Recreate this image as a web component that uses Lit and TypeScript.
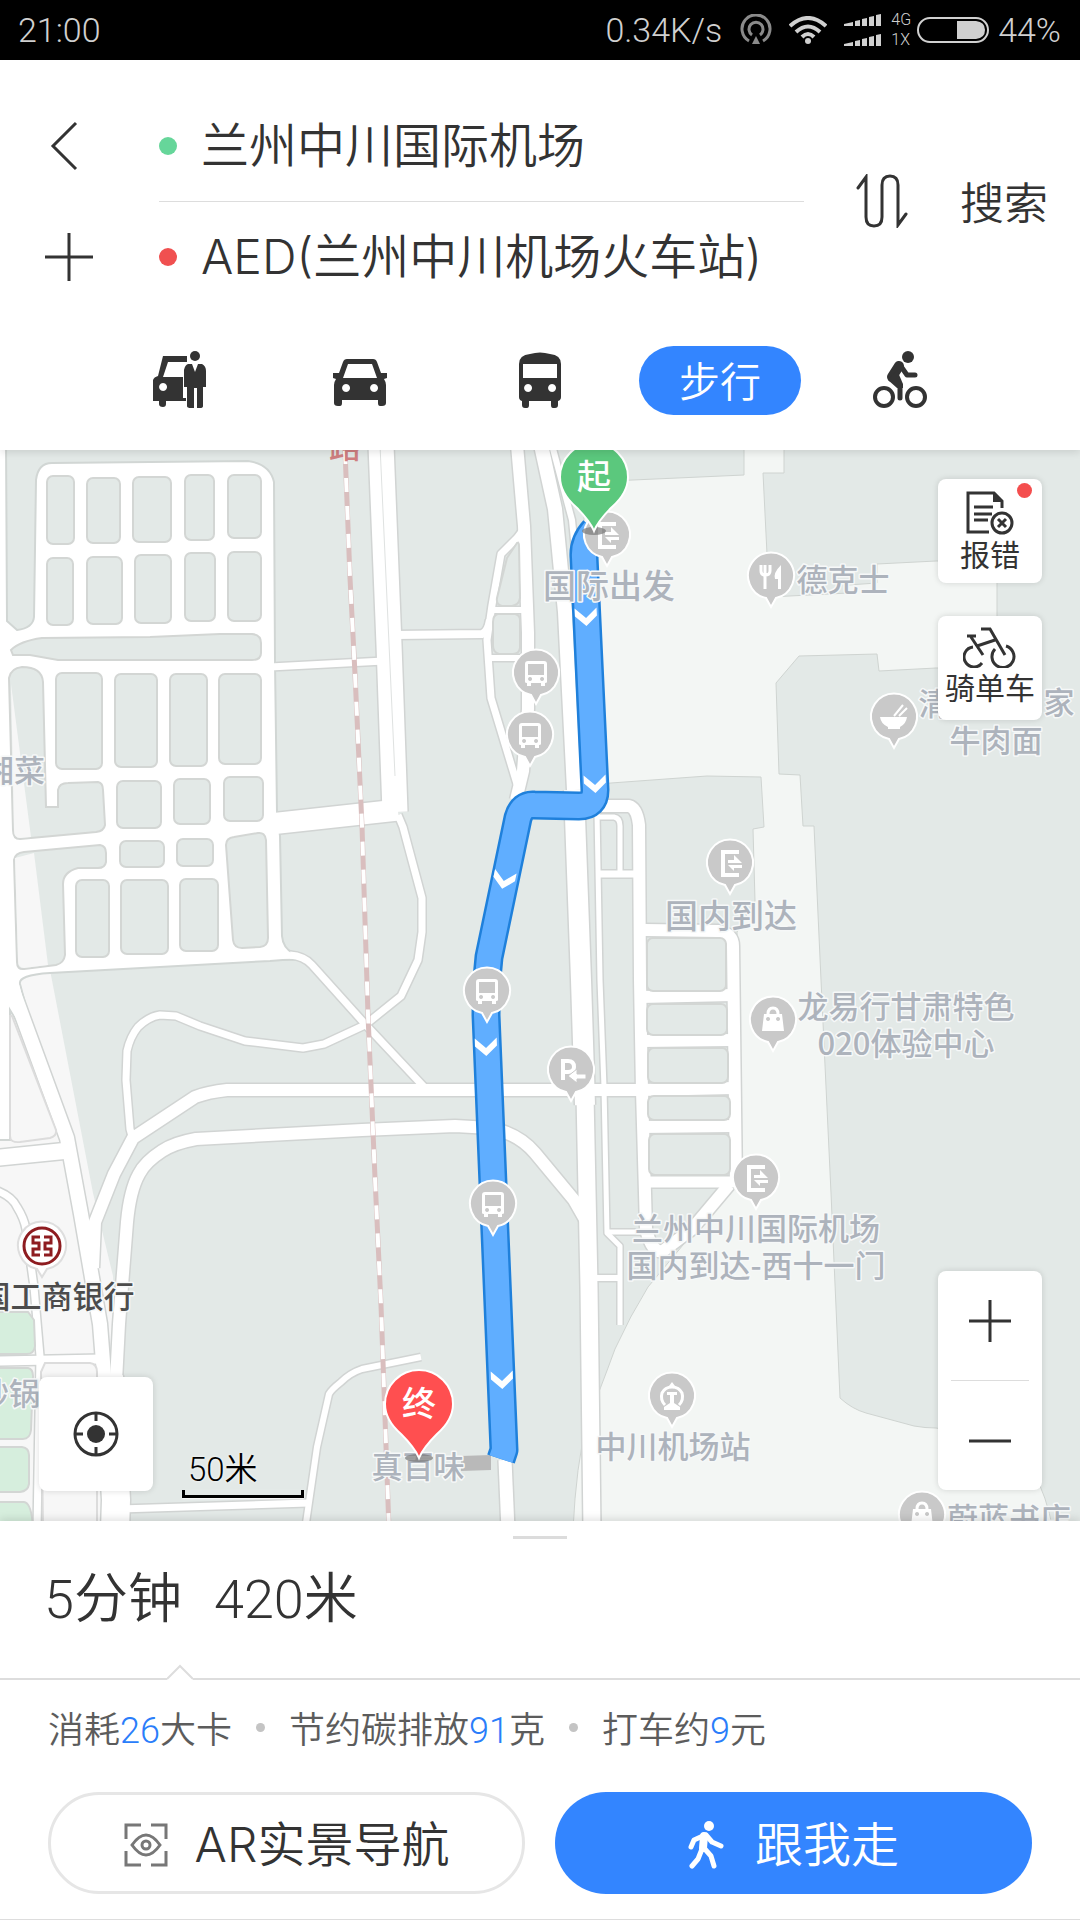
import { LitElement, html, svg, css } from "lit";
import { customElement, state } from "lit/decorators.js";

type Road = [width: number, d: string];

const roads: Road[] = [
  [25, "M381 445 L389 645 L395 812"],
  [21, "M270 824 L398 810"],
  [7, "M270 667 L384 661"],
  [8, "M395 635 L482 634 Q488 632 490 620"],
  [12, "M517 445 L524 526 L528 633 L528 709 L523 771 L516 800"],
  [7, "M523 530 L517 538 L501 554 L492 605 L487 640 L491 698 L517 784"],
  [6, "M493 610 L528 610"],
  [6, "M490 658 L528 658"],
  [14, "M541 445 L555 509 L565 612 L574 790"],
  [6, "M552 445 L572 520 L584 640 L588 780"],
  [20, "M574 790 L581 980 L585 1105"],
  [17, "M585 1095 L589 1287 L592 1530"],
  [12, "M590 806 L629 806 Q637 808 639 825 L640 980 L642 1091 L645 1193 L646 1229 Q652 1254 663 1251 L692 1229 L729 1185"],
  [5, "M597 812 L600 980 L604 1087 L607 1233 L620 1246 L620 1325"],
  [5, "M598 817 L614 817 Q620 818 620 826 L620 872"],
  [7, "M600 874 L638 874"],
  [5, "M607 1232 L645 1232"],
  [6, "M590 1278 L620 1278"],
  [12, "M645 930 L718 931 Q733 934 733 946 L736 1187"],
  [12, "M640 997 L734 995"],
  [12, "M640 1041 L734 1040"],
  [12, "M640 1090 L735 1088"],
  [12, "M640 1127 L735 1126"],
  [11, "M643 1182 L734 1182"],
  [7, "M425 1088 L365 1024 L312 965 Q304 956 290 955"],
  [7, "M133 1140 L130 1129 L126 1080 L127 1051 Q130 1037 138 1027 Q148 1017 160 1015 L176 1016 L200 1026 L245 1041 L303 1048 L324 1044 L365 1025 L401 996 L418 960 L422 932 L422 898 L403 827 L398 815"],
  [12, "M640 1090 L227 1090 Q208 1092 195 1097 L133 1138 L114 1174 L95 1222 L93 1268"],
  [12, "M590 1228 L574 1200 L535 1153 Q518 1133 490 1128 L455 1126 L362 1130 L196 1139 Q174 1143 162 1151 Q145 1162 139 1174 Q130 1190 127 1222 L119 1324 L115 1400"],
  [14, "M5 960 L15 996 L67 1138 L81 1214 L100 1324 L106 1400"],
  [28, "M109 1376 L116 1500 L115 1530"],
  [6, "M421 1357 L362 1369 Q350 1373 341 1382 Q331 1390 329 1394 L317 1447 L305 1530"],
  [7, "M120 1509 L308 1503"],
  [13, "M505 1460 L508 1530"],
  [7, "M-5 1190 Q12 1196 17 1207 Q24 1218 26 1229 L34 1287 L40 1356 L37 1530"],
  [16, "M-5 1158 L64 1151"],
  [9, "M-5 1361 L102 1359"],
];

const railway = "M345 450 L350 578 L355 674 L362 826 L368 1015 L375 1178 L381 1305 L389 1530";

/* Blocks enclosed by the streets: x, y, width, height. */
const blocks = [
  [47, 476, 27, 68], [87, 478, 33, 65], [133, 477, 38, 65], [185, 475, 29, 65], [228, 475, 33, 63],
  [47, 558, 26, 67], [87, 557, 35, 67], [135, 555, 36, 68], [185, 553, 30, 68], [228, 552, 33, 69],
  [56, 673, 46, 96], [115, 674, 42, 93], [170, 674, 37, 92], [219, 674, 42, 90],
  [117, 781, 44, 47], [174, 779, 36, 45], [224, 777, 39, 44],
  [120, 841, 44, 26], [177, 839, 36, 27],
  [76, 880, 33, 77], [121, 880, 47, 74], [180, 879, 38, 72],
  [647, 938, 79, 53], [647, 1004, 80, 31], [648, 1048, 80, 35], [648, 1096, 82, 24], [649, 1134, 81, 41],
];

const pins: [number, number, string][] = [
  [607, 535, "exit"], [536, 673, "bus"], [530, 735, "bus"], [487, 991, "bus"], [493, 1204, "bus"],
  [571, 1070, "parking"], [730, 863, "exit"], [756, 1178, "exit"], [771, 576, "food"],
  [894, 717, "noodle"], [773, 1020, "bag"], [922, 1515, "bag"], [672, 1396, "train"],
];

const glyphs: Record<string, unknown> = {
  bus: svg`<path fill="#fff" fill-rule="evenodd" d="M-8 -12H8Q11 -12 11 -9V9Q11 10 9 10V13H5V10H-5V13H-9V10Q-11 10 -11 9V-9Q-11 -12 -8 -12ZM-8 -9V2H8V-9ZM-6 4a2 2 0 1 0 .1 0ZM6 4a2 2 0 1 0 .1 0Z"/>`,
  exit: svg`<path fill="none" stroke="#fff" stroke-width="4" d="M9 -11H-7V12H9"/><path fill="#fff" d="M-2 -3H4V-8L12 0H-2ZM12 2H-2L4 8V5H12Z"/>`,
  parking: svg`<path fill="none" stroke="#fff" stroke-width="4" d="M-8 10V-9H-3Q3 -9 3 -3Q3 2 -3 2H-8"/><path fill="#fff" stroke="#c9c9c9" stroke-width="1" d="M-3 6L6 -1V4H15V9H6V13Z"/>`,
  food: svg`<path fill="none" stroke="#fff" stroke-width="3" d="M-10 -11V-5Q-10 -1 -6 -1Q-1 -1 -1 -5V-11M-6 -11V13"/><path fill="#fff" d="M10 -11Q2 -3 4 3H7V13H10V-11Z"/>`,
  noodle: svg`<path fill="#fff" d="M-14 0H13Q12 7 6 10V12H-6V10Q-13 7 -14 0Z"/><path stroke="#fff" stroke-width="2" d="M0 -1L9 -12M5 -1L13 -9"/>`,
  bag: svg`<path fill="#fff" fill-rule="evenodd" d="M-9 -6H9L11 11H-11ZM-5 -3a2 2 0 1 0 .1 0ZM5 -3a2 2 0 1 0 .1 0Z"/><path fill="none" stroke="#fff" stroke-width="3" d="M-5 -6Q-5 -12 0 -12Q5 -12 5 -6"/>`,
  train: svg`<path fill="none" stroke="#fff" stroke-width="3" d="M-7 9Q-12 4 -10 -3Q-7 -9 0 -9Q7 -9 10 -3Q12 4 7 9"/><path fill="#fff" d="M-3 -10L0 -14L3 -10ZM-5 -4H5V-1H2V7L8 11V14H-8V11L-2 7V-1H-5Z"/>`,
};

const labels: [number, number, string, number?][] = [
  [609, 598, "国际出发", 33], [843, 591, "德克士"], [934, 715, "清"], [1059, 714, "家"],
  [996, 752, "牛肉面"], [731, 928, "国内到达", 33], [906, 1018, "龙易行甘肃特色"],
  [906, 1055, "020体验中心"], [756, 1240, "兰州中川国际机场"], [756, 1277, "国内到达-西十一门"],
  [673, 1458, "中川机场站"], [1009, 1530, "蔚蓝书店"], [418, 1478, "真百味"],
  [14, 782, "湘菜"], [9, 1405, "砂锅"],
];

@customElement("route-map")
export class RouteMap extends LitElement {
  static styles = css`
    :host { display: block; position: absolute; inset: 0; overflow: hidden; }
    .canvas { display: block; width: 100%; height: 100%; }
    .casing { fill: none; stroke: #d1d4d3; stroke-linejoin: round; }
    .road { fill: none; stroke: #fff; stroke-linejoin: round; }
    .block { fill: #e3e9e7; stroke: #d3d6d4; stroke-width: 2; }
    .plain { fill: #f7f7f7; stroke: #dcdcdc; stroke-width: 2; }
    .green { fill: #d6eedd; stroke: #d3d6d4; stroke-width: 2; }
    .hall { fill: #f3f6f4; stroke: #cfd4d1; stroke-width: 1; }
    .label { font-family: "Noto Sans CJK SC", sans-serif; font-weight: 500; fill: #adb3bc; text-anchor: middle;
      paint-order: stroke; stroke: #f6f8f8; stroke-width: 3; stroke-linejoin: round; }
    .bank { fill: #4c4c4c; }
    .stop { font-family: "Noto Sans CJK SC", sans-serif; font-size: 34px; font-weight: 500; fill: #fff; text-anchor: middle; }
    .line { font-family: "Noto Sans CJK SC", sans-serif; font-size: 32px; font-weight: 500; fill: #cf7f80; text-anchor: middle; }
  `;

  render() {
    return html`<svg class="canvas" viewBox="0 450 1080 1071" preserveAspectRatio="xMidYMid slice" role="img" aria-label="步行路线">
      <rect y="440" width="1080" height="1090" fill="#e3e9e7" />
      <path fill="#f7f7f7" d="M0 970 L50 970 L93 1193 L113 1276 L125 1530 L0 1530Z" />
      <path class="hall" d="M584 482 L633 480 L744 475 V440 H784 V473 H763 L767 554 L770 597 L848 593 V585 L877 583 V564 L936 561 H997 V668 H936 L879 671 L877 654 L799 656 L776 683 L779 774 L800 775 L803 826 H814 L821 980 L831 1193 L840 1398 Q852 1409 866 1413 L914 1426 Q925 1428 936 1428 L1000 1440 Q1040 1460 1053 1530 H573 Q576 1465 587 1422 Q600 1390 615 1349 Q630 1316 648 1287 L733 1185 L742 1156 L737 932 L755 901 L753 829 L764 827 L761 777 L707 776 L611 783 L584 786Z" />

      ${roads.map(([w, d]) => svg`<path class="casing" stroke-width=${w + 3} d=${d} />`)}
      <path d="M-5 440 H6 L7 621 L17 630 Q33 628 34 617 L36 480 Q38 463 52 463 L248 461 Q270 464 274 482 L275 662 L277 812 L280 836 L282 936 Q283 948 293 953 L303 960 Q290 959 270 961 L50 973 Q18 975 20 984 L40 1060 L10 1010 V1140 H-5Z"
        fill="#fff" stroke="#d1d6d4" stroke-width="2" />
      ${roads.map(([w, d]) => svg`<path class="road" stroke-width=${w} d=${d} />`)}
      <path d="M380 445 L395 776" stroke="#dfe2e1" stroke-width="1" />

      ${blocks.map(([x, y, w, h]) => svg`<rect class="block" x=${x} y=${y} width=${w} height=${h} rx="6" />`)}
      <path class="block" d="M11 650 Q20 641 42 638 L150 637 L220 634 H252 Q261 635 261 643 V653 Q261 660 252 660 H100 L58 660 L30 655 H13Z" />
      <path class="block" d="M9 678 Q11 668 22 667 Q42 667 43 682 L46 807 H58 V790 Q59 783 68 783 L98 782 Q103 783 103 790 L105 825 Q104 831 96 832 L20 839 Q13 839 13 830Z" />
      <path class="block" d="M14 860 Q15 853 24 852 L100 845 Q106 846 106 853 V862 Q105 868 98 868 H78 Q63 872 63 884 L65 955 Q64 963 56 965 L24 969 Q17 970 17 962Z" />
      <path class="block" d="M226 845 Q226 838 234 837 L258 833 Q265 832 266 840 L268 938 Q268 946 260 947 L242 948 Q234 948 233 940Z" />
      <path fill="#f7f7f7" d="M11 684 L31 837 L20 838 Q14 838 14 830ZM15 858 L34 853 L48 965 L24 968 Q18 968 18 960Z" />
      <path class="plain" d="M12 1016 L56 1130 Q57 1136 50 1138 L20 1142 Q10 1143 10 1136 V1016Z" />
      <path class="plain" d="M45 1363 H90 Q97 1364 97 1372 V1530 H43 L41 1372Z" />
      <path class="green" d="M-5 1312 H28 L34 1320 L35 1346 Q34 1354 27 1354 H-5ZM-5 1368 H28 Q33 1369 33 1376 L31 1430 Q30 1439 23 1439 H-5ZM-5 1447 H22 Q29 1448 29 1455 V1484 Q28 1491 20 1492 H-5ZM-5 1502 H24 Q32 1503 33 1530 H-5Z" />
      <path class="block" d="M498 614 H515 Q520 615 520 620 V648 Q519 654 513 654 H499 Q493 652 493 646 V622 Q493 615 498 614ZM507 558 L517 543 Q519 542 519 546 L520 598 Q519 605 512 606 H502 Q496 605 497 598Z" />

      <path d=${railway} fill="none" stroke="#d9bebe" stroke-width="5" />
      <path d=${railway} fill="none" stroke="#fff" stroke-width="4" stroke-dasharray="14 14" />
      <text class="line" x="345" y="458">路</text>

      <path d="M461 1456 L491 1455 V1470 L461 1471Z" fill="#b9b9b9" />
      <path d="M594 530 Q583 542 584 557 L595 790 Q595 806 579 806 L534 805 Q522 804 518 818 L489 957 Q486 985 486 1015 L504 1450 L501 1459" fill="none" stroke="#1f80db" stroke-width="29" stroke-linejoin="round" />
      <path d="M594 530 Q583 542 584 557 L595 790 Q595 806 579 806 L534 805 Q522 804 518 818 L489 957 Q486 985 486 1015 L504 1450 L501 1459" fill="none" stroke="#60aeff" stroke-width="24" stroke-linejoin="round" />
      ${[[586, 617, -3], [595, 784, -3], [504, 880, 12], [486, 1047, -2], [502, 1380, -2]].map(
        ([x, y, r]) => svg`<path transform="translate(${x} ${y}) rotate(${r})" fill="#fff" d="M-11 -9 L0 1 L11 -9 V-1 L0 9 L-11 -1Z" />`
      )}

      ${labels.map(([x, y, t, s]) => svg`<text class="label" font-size=${s ?? 31} x=${x} y=${y}>${t}</text>`)}
      <text class="label bank" font-size="31" x="57" y="1308">国工商银行</text>

      ${pins.map(([x, y, k]) => svg`<g transform="translate(${x} ${y})">
        <path fill="#c9c9c9" stroke="#fff" stroke-width="2" d="M-5 22 A23 23 0 1 1 5 22 L0 31Z" />${glyphs[k]}</g>`)}
      <g transform="translate(42 1246)">
        <path fill="#fff" stroke="#dedede" stroke-width="2" d="M-5 23 A24 24 0 1 1 5 23 L0 31Z" />
        <circle r="18" fill="none" stroke="#8e1c20" stroke-width="3" />
        <path fill="none" stroke="#8e1c20" stroke-width="3" d="M-2 -9H-9V-3H-3V3H-9V9H-2M2 -9H9V-3H3V3H9V9H2" />
      </g>
      <g transform="translate(594 477)">
        <ellipse cy="54" rx="12" ry="4" fill="#777" opacity=".7" />
        <path fill="#5bc87d" stroke="#fff" stroke-width="2" d="M0 54 Q-4 44 -18 30 Q-34 16 -34 0 A34 34 0 0 1 34 0 Q34 16 18 30 Q4 44 0 54Z" />
        <text class="stop" y="12">起</text>
      </g>
      <g transform="translate(419 1404)">
        <ellipse cy="54" rx="14" ry="4" fill="#777" opacity=".7" />
        <path fill="#ff4f50" stroke="#fff" stroke-width="2" d="M0 54 Q-4 44 -18 30 Q-34 16 -34 0 A34 34 0 0 1 34 0 Q34 16 18 30 Q4 44 0 54Z" />
        <text class="stop" y="12">终</text>
      </g>
    </svg>`;
  }
}

const modes = [
  { id: "taxi", name: "打车", icon: svg`<path fill="#333" fill-rule="evenodd" d="M10 6H34V12H15L10 27H30V48H33V51H13V54Q13 57 10 57Q6 57 6 54V51H0V30Q1 27 5 26L10 6ZM10 33a4 4 0 1 0 .1 0Z"/><circle cx="42" cy="6" r="5" fill="#333"/><path fill="#333" d="M35 14H39L42 22L45 14H49Q53 16 53 21V37H50V56Q50 58 47 58H44V38H41V58H38Q34 58 34 56V37H31V20Q32 15 35 14Z"/>` },
  { id: "car", name: "驾车", icon: svg`<path fill="#333" fill-rule="evenodd" d="M14 9H40Q43 9 44 12L48 23H54V28L51 29Q53 32 53 35V53Q53 56 49 56H47Q45 56 45 53V50H9V53Q9 56 7 56H5Q1 56 1 53V35Q1 32 3 29L0 28V23H6L10 12Q11 9 14 9ZM15 14L10 28H44L39 14ZM13 34a4 4 0 1 0 .1 0ZM41 34a4 4 0 1 0 .1 0Z"/>` },
  { id: "bus", name: "公交", icon: svg`<path fill="#333" fill-rule="evenodd" d="M17 4Q27 1 37 4Q48 5 48 14V47Q48 50 45 51V55Q45 58 42 58H40Q38 58 38 55V51H16V55Q16 58 14 58H12Q9 58 9 55V51Q6 50 6 47V14Q6 5 17 4ZM10 14V28H44V14ZM15 34a4 4 0 1 0 .1 0ZM39 34a4 4 0 1 0 .1 0Z"/>` },
  { id: "walk", name: "步行", icon: null },
  { id: "bike", name: "骑行", icon: svg`<g fill="none" stroke="#333"><circle cx="11" cy="47" r="9" stroke-width="4"/><circle cx="43" cy="47" r="9" stroke-width="4"/><path stroke-width="5" stroke-linejoin="round" stroke-linecap="round" d="M27 48V36L19 29M27 15L34 25H42"/><path stroke-width="10" stroke-linejoin="round" stroke-linecap="round" d="M19 27L26 16"/></g><path fill="#333" d="M15 30L24 20L30 34V38L24 38Z"/><circle cx="35" cy="7" r="6" fill="#333"/>` },
];

@customElement("app-root")
export class AppRoot extends LitElement {
  @state() private mode = "walk";

  static styles = css`
    :host { display: flex; flex-direction: column; min-height: 100vh; background: #fff; color: #333;
      font-family: Roboto, "Noto Sans CJK SC", sans-serif; font-weight: 350; }
    * { box-sizing: border-box; }
    svg { display: block; flex: none; }
    button { border: 0; padding: 0; margin: 0; background: none; color: inherit; font: inherit; cursor: pointer;
      display: flex; align-items: center; justify-content: center; }
    .status { display: flex; align-items: center; justify-content: space-between; height: 60px; padding: 0 19px 0 18px;
      background: #000; color: #d0d0d0; font-size: 34px; }
    .status-right { display: flex; align-items: center; }
    .rate { margin-right: 18px; }
    .net { display: flex; flex-direction: column; margin: 0 6px 0 9px; font-size: 16px; line-height: 20px; }
    .charge { margin-left: 9px; }
    .wifi { margin: 0 17px; }

    .header { padding-top: 30px; box-shadow: 0 2px 8px rgba(0, 0, 0, 0.12); z-index: 1; }
    .query { display: grid; grid-template-columns: 138px minmax(0, 1fr) 276px; }
    .side { display: grid; grid-template-rows: 111px 111px; }
    .side button { justify-content: flex-start; padding-left: 45px; }
    .fields { padding-left: 21px; }
    .field { display: flex; align-items: center; gap: 24px; height: 111px; }
    .field + .field { border-top: 1px solid #ddd; }
    .dot { flex: none; width: 18px; height: 18px; border-radius: 50%; background: #66d69a; }
    .dot.to { background: #f05050; }
    .place { width: 100%; min-width: 0; border: 0; padding: 0; outline: 0; background: none; color: #333;
      font: 350 48px/72px Inter, "Noto Sans CJK SC", sans-serif; }
    .go { display: flex; align-items: center; padding-left: 52px; gap: 52px; font: 350 44px/66px "Noto Sans CJK SC", sans-serif; }
    .modes { display: grid; grid-template-columns: repeat(5, 1fr); padding: 0 90px 2px; height: 138px; align-items: center; }
    .mode { height: 69px; justify-self: center; min-width: 54px; }
    .mode.active { width: 162px; border-radius: 35px; background: #3385ff; color: #fff;
      font: 350 41px/60px "Noto Sans CJK SC", sans-serif; padding-bottom: 2px; }

    .map { position: relative; flex: 1; min-height: 480px; overflow: hidden; background: #e3e9e7; }
    .tools { position: absolute; right: 38px; top: 29px; display: flex; flex-direction: column; gap: 33px; }
    .card { background: #fff; border-radius: 8px; box-shadow: 0 0 6px rgba(0, 0, 0, 0.14); }
    .tool { position: relative; width: 104px; height: 104px; padding-top: 10px; flex-direction: column; justify-content: flex-start;
      font: 400 30px/36px "Noto Sans CJK SC", sans-serif; color: #333; }
    .badge { position: absolute; top: 4px; right: 10px; width: 15px; height: 15px; border-radius: 50%; background: #f44e4e; }
    .zoom { position: absolute; right: 38px; bottom: 31px; width: 104px; padding: 0 13px; }
    .zoom button { width: 100%; height: 109px; }
    .zoom .in { padding-bottom: 10px; }
    .zoom .out { padding-top: 10px; height: 110px; border-top: 1px solid #ddd; }
    .locate { position: absolute; left: 39px; bottom: 30px; width: 114px; height: 114px; }
    .scale { position: absolute; left: 182px; bottom: 23px; width: 122px; color: #000; font-size: 33px; line-height: 40px; }
    .scale-text { padding-left: 6px; text-shadow: 0 0 3px #fff; }
    .bar { height: 8px; border: 3px solid #000; border-top: 0; box-shadow: 0 1px 2px #fff; }

    .sheet { position: relative; box-shadow: 0 -2px 8px rgba(0, 0, 0, 0.12); background: #fff; border-bottom: 1px solid #ddd;
      padding-top: 15px; }
    .handle { width: 54px; height: 3px; margin: 0 auto; background: #dcdcdc; }
    .total { margin: 0; height: 141px; padding: 0 44px 30px; display: flex; align-items: center; gap: 32px; font-size: 54px; font-weight: 350; }
    .rule { width: 100%; height: 16px; margin-top: -16px; display: flex; align-items: flex-end; }
    .rule::before { content: ""; width: 167px; border-bottom: 2px solid #ddd; }
    .rule::after { content: ""; flex: 1; border-bottom: 2px solid #ddd; }
    .facts { display: flex; align-items: center; height: 98px; padding: 0 48px 4px; gap: 24px; font-size: 36px; color: #5c5c5c; }
    .facts b { font-weight: 350; color: #2a7dfa; }
    .sep { width: 9px; height: 9px; border-radius: 50%; background: #c4c4c4; }
    .actions { display: grid; grid-template-columns: 1fr 1fr; gap: 30px; padding: 14px 48px 25px; }
    .action { height: 102px; border-radius: 51px; gap: 27px; padding-top: 3px; font: 350 48px/72px Inter, "Noto Sans CJK SC", sans-serif; }
    .ar { border: 3px solid #e6e6e6; }
    .follow { background: #3385ff; color: #fff; gap: 31px; }
  `;

  private select(id: string) {
    this.mode = id;
  }

  render() {
    return html`
      <div class="status">
        <span>21:00</span>
        <div class="status-right">
          <span class="rate">0.34K/s</span>
          <svg width="32" height="32" viewBox="0 0 32 32" fill="none" stroke="#8a8a8a" stroke-width="3">
            <path d="M9 27A14 14 0 1 1 23 27M12 21A7 7 0 1 1 20 21" /><path d="M16 22L20 30H12Z" fill="#8a8a8a" stroke="none" />
          </svg>
          <svg class="wifi" width="38" height="28" viewBox="0 0 38 28" fill="none" stroke="#d0d0d0" stroke-width="4">
            <path d="M1 10Q19 -6 37 10M7 16Q19 5 31 16M13 21Q19 15 25 21" /><circle cx="19" cy="25" r="3" fill="#d0d0d0" stroke="none" />
          </svg>
          <svg width="38" height="32" viewBox="0 0 38 32" fill="#d0d0d0">
            <path d="M0 12V10L9 8V12ZM11 12V7L16 6V12ZM18 12V5L23 4V12ZM25 12V3L30 2V12ZM32 12V1L37 0V12ZM0 32V30L9 28V32ZM11 32V27L16 26V32ZM18 32V25L23 24V32ZM25 32V23L30 22V32ZM32 32V21L37 20V32Z" />
          </svg>
          <span class="net"><span>4G</span><span>1X</span></span>
          <svg width="72" height="26" viewBox="0 0 72 26">
            <rect x="1" y="1" width="70" height="24" rx="12" fill="none" stroke="#d0d0d0" stroke-width="2" />
            <path d="M40 4H59Q68 5 68 13Q68 21 59 22H40Z" fill="#d0d0d0" />
          </svg>
          <span class="charge">44%</span>
        </div>
      </div>

      <header class="header">
        <div class="query">
          <div class="side">
            <button aria-label="返回"><svg width="38" height="50" viewBox="0 0 38 50" fill="none" stroke="#333" stroke-width="3"><path d="M31 2L8 25L31 48" /></svg></button>
            <button aria-label="添加途经点"><svg width="48" height="48" viewBox="0 0 48 48" stroke="#333" stroke-width="3"><path d="M0 24H48M24 0V48" /></svg></button>
          </div>
          <div class="fields">
            <label class="field"><span class="dot"></span><input class="place" aria-label="起点" value="兰州中川国际机场" /></label>
            <label class="field"><span class="dot to"></span><input class="place" aria-label="终点" value="AED(兰州中川机场火车站)" /></label>
          </div>
          <div class="go">
            <button aria-label="交换起终点"><svg width="52" height="54" viewBox="0 0 52 54" fill="none" stroke="#333" stroke-width="3" stroke-linecap="round"><path d="M2 14L10 3V43Q10 52 18 52Q26 52 26 43V11Q26 2 34 2Q42 2 42 11V51L50 40" /></svg></button>
            <button>搜索</button>
          </div>
        </div>
        <nav class="modes">
          ${modes.map((m) => html`<button class="mode ${m.id === this.mode ? "active" : ""}" aria-label=${m.name} aria-pressed=${m.id === this.mode}
            @click=${() => this.select(m.id)}>
            ${m.icon ? html`<svg width="54" height="60" viewBox="0 0 54 60">${m.icon}</svg>` : m.name}</button>`)}
        </nav>
      </header>

      <main class="map">
        <route-map></route-map>
        <div class="tools">
          <button class="card tool">
            <svg width="48" height="46" viewBox="0 0 48 46" fill="none" stroke="#333" stroke-width="3">
              <path d="M23 43H2V4H28L36 12V19M8 18H27M8 25H26M8 31H22" /><path d="M27 4V13H36Z" fill="#333" stroke="none" />
              <circle cx="36" cy="34" r="10" fill="#fff" /><path d="M32 30L40 38M40 30L32 38" />
            </svg>
            报错<span class="badge"></span>
          </button>
          <button class="card tool">
            <svg width="54" height="42" viewBox="0 1 54 42" fill="none" stroke="#333" stroke-width="3">
              <path d="M10 22A10 10 0 1 0 19 38M43 21A11 11 0 1 1 32 24M4 11H13M8 12L20 30M14 21L32 15M18 4H27L42 30" />
            </svg>
            骑单车
          </button>
        </div>
        <button class="card locate" aria-label="定位">
          <svg width="46" height="46" viewBox="0 0 46 46" fill="none" stroke="#333" stroke-width="3">
            <circle cx="23" cy="23" r="21" /><circle cx="23" cy="23" r="9" fill="#333" stroke="none" /><path d="M23 2V10M23 36V44M2 23H10M36 23H44" />
          </svg>
        </button>
        <div class="scale"><div class="scale-text">50米</div><div class="bar"></div></div>
        <div class="card zoom">
          <button class="in" aria-label="放大"><svg width="42" height="42" viewBox="0 0 42 42" stroke="#333" stroke-width="3"><path d="M0 21H42M21 0V42" /></svg></button>
          <button class="out" aria-label="缩小"><svg width="42" height="42" viewBox="0 0 42 42" stroke="#333" stroke-width="3"><path d="M0 21H42" /></svg></button>
        </div>
      </main>

      <section class="sheet">
        <div class="handle"></div>
        <h1 class="total"><span>5分钟</span><span>420米</span></h1>
        <div class="rule"><svg width="26" height="16" viewBox="0 0 26 16" fill="#fff" stroke="#ddd" stroke-width="2"><path d="M0 15L13 2L26 15" /></svg></div>
        <div class="facts">
          <span>消耗<b>26</b>大卡</span><i class="sep"></i><span>节约碳排放<b>91</b>克</span><i class="sep"></i><span>打车约<b>9</b>元</span>
        </div>
        <div class="actions">
          <button class="action ar">
            <svg width="44" height="44" viewBox="0 0 44 44" fill="none" stroke="#777" stroke-width="3">
              <path d="M2 16V2H17M27 2H42V16M42 28V42H27M17 42H2V28M8 22Q22 2 36 22Q22 42 8 22Z" /><circle cx="22" cy="22" r="4" />
            </svg>
            AR实景导航
          </button>
          <button class="action follow">
            <svg width="36" height="48" viewBox="0 0 36 48" fill="none" stroke="#fff" stroke-linecap="round" stroke-linejoin="round">
              <circle cx="21" cy="5" r="5" fill="#fff" stroke="none" /><path stroke-width="8" d="M16 15L15 27" /><path stroke-width="5" d="M17 14L6 19L3 26M18 14L24 21L33 25M14 28L10 38L4 45M16 27L23 35L26 45" />
            </svg>
            跟我走
          </button>
        </div>
      </section>
    `;
  }
}
